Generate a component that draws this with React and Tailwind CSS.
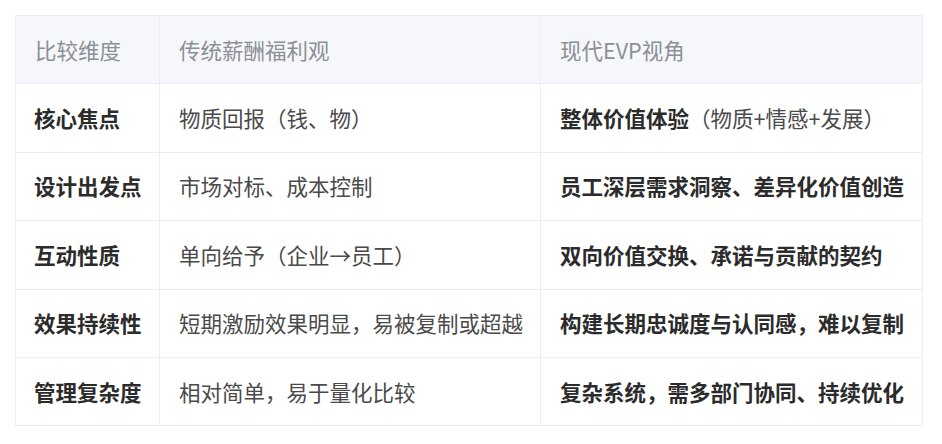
const rows = [
  { dim: '核心焦点', old: '物质回报（钱、物）', evp: '整体价值体验', note: '（物质+情感+发展）' },
  { dim: '设计出发点', old: '市场对标、成本控制', evp: '员工深层需求洞察、差异化价值创造' },
  { dim: '互动性质', old: '单向给予（企业→员工）', evp: '双向价值交换、承诺与贡献的契约' },
  { dim: '效果持续性', old: '短期激励效果明显，易被复制或超越', evp: '构建长期忠诚度与认同感，难以复制' },
  { dim: '管理复杂度', old: '相对简单，易于量化比较', evp: '复杂系统，需多部门协同、持续优化' },
];

const App = () => {
  return (
    <div
      className="min-h-screen bg-white pt-[15px] pl-[15px]"
      style={{ fontFamily: '"Noto Sans CJK SC", "Noto Sans", sans-serif' }}
    >
      <table className="table-fixed w-[907px] border-collapse text-[21.5px] leading-[32.4px]">
        <colgroup>
          <col className="w-[144px]" />
          <col className="w-[381px]" />
          <col className="w-[382px]" />
        </colgroup>
        <thead>
          <tr className="bg-[#f5f7fa] text-[#8c8f96]">
            <th className="border border-[#eceef2] px-[19px] py-[17.5px] text-left font-normal whitespace-nowrap">
              比较维度
            </th>
            <th className="border border-[#eceef2] px-[19px] py-[17.5px] text-left font-normal whitespace-nowrap">
              传统薪酬福利观
            </th>
            <th className="border border-[#eceef2] px-[19px] py-[17.5px] text-left font-normal whitespace-nowrap">
              现代EVP视角
            </th>
          </tr>
        </thead>
        <tbody>
          {rows.map((r) => (
            <tr key={r.dim}>
              <td className="border border-[#eceef2] px-[18px] py-[17.5px] font-bold text-[#2b2b2b] whitespace-nowrap">
                {r.dim}
              </td>
              <td className="border border-[#eceef2] px-[19px] py-[17.5px] text-[#4a4a4a] whitespace-nowrap">
                {r.old}
              </td>
              <td className="border border-[#eceef2] px-[19px] py-[17.5px] whitespace-nowrap">
                <span className="font-bold text-[#2b2b2b]">{r.evp}</span>
                {r.note && <span className="text-[#4a4a4a]">{r.note}</span>}
              </td>
            </tr>
          ))}
        </tbody>
      </table>
    </div>
  );
};

export default App;
